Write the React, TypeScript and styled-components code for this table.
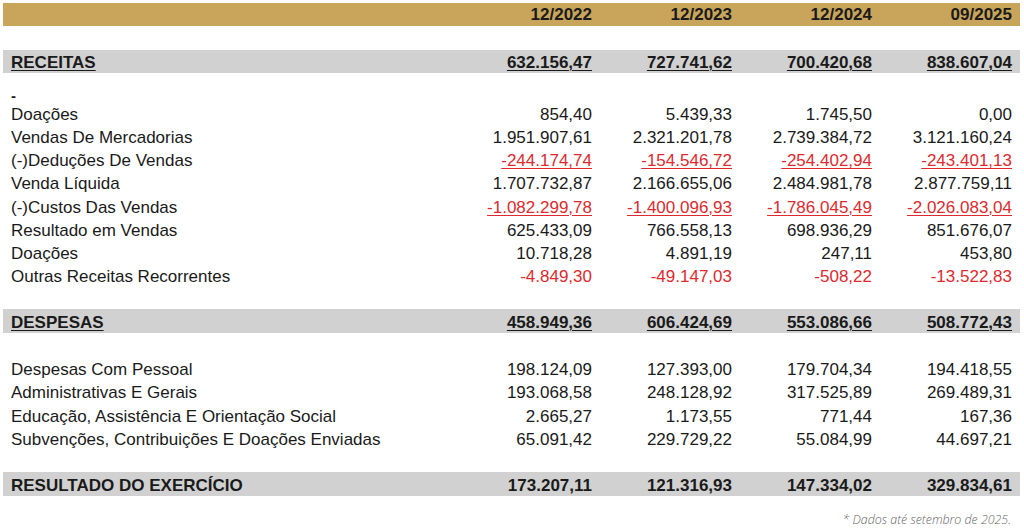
import React from "react";
import styled, { createGlobalStyle, css } from "styled-components";

const Global = createGlobalStyle`
  html, body { margin: 0; padding: 0; background: #ffffff; }
  body { font-family: "Liberation Sans", Arial, sans-serif; color: #1a1a1a; }
`;

const Page = styled.div`
  width: 1024px;
  height: 529px;
  box-sizing: border-box;
  padding: 3px 4px 0 3px;
  overflow: hidden;
`;

const Row = styled.div<{ $h?: number; $shift?: number; $bg?: string; $bold?: boolean }>`
  display: grid;
  grid-template-columns: 1fr 140px 140px 140px 140px;
  box-sizing: border-box;
  height: ${(p) => p.$h ?? 23.25}px;
  padding-top: ${(p) => p.$shift ?? 1}px;
  line-height: ${(p) => (p.$h ?? 23.25) - (p.$shift ?? 1)}px;
  background: ${(p) => p.$bg ?? "transparent"};
  font-size: 17px;
  font-weight: ${(p) => (p.$bold ? 700 : 400)};
  white-space: nowrap;
`;

const Label = styled.div<{ $underline?: boolean }>`
  padding-left: 8px;
  ${(p) =>
    p.$underline &&
    css`
      text-decoration: underline;
      text-decoration-thickness: 1px;
      text-underline-offset: 2px;
    `}
`;

const Cell = styled.div<{ $neg?: boolean; $underline?: boolean }>`
  text-align: right;
  padding-right: 8px;
  color: ${(p) => (p.$neg ? "#dc2a2e" : "inherit")};
  span {
    ${(p) =>
      p.$underline &&
      css`
        text-decoration: underline;
        text-decoration-thickness: 1px;
        text-underline-offset: 2px;
      `}
  }
`;

const Spacer = styled.div<{ $h: number }>`
  height: ${(p) => p.$h}px;
`;

const DashRow = styled.div`
  height: 29.5px;
  box-sizing: border-box;
  padding: 20px 0 0 8px;
  font-size: 15px;
  font-weight: 700;
  line-height: 6px;
  overflow: visible;
`;

const Footnote = styled.div`
  margin-top: 17px;
  padding-right: 9px;
  text-align: right;
  font-family: "Open Sans", sans-serif;
  font-style: italic;
  font-weight: 300;
  font-size: 12.4px;
  color: #666666;
  line-height: 14px;
`;

type Line = { label: string; values: string[]; underlineNeg?: boolean };

const receitas: Line[] = [
  { label: "Doações", values: ["854,40", "5.439,33", "1.745,50", "0,00"] },
  { label: "Vendas De Mercadorias", values: ["1.951.907,61", "2.321.201,78", "2.739.384,72", "3.121.160,24"] },
  { label: "(-)Deduções De Vendas", values: ["-244.174,74", "-154.546,72", "-254.402,94", "-243.401,13"], underlineNeg: true },
  { label: "Venda Líquida", values: ["1.707.732,87", "2.166.655,06", "2.484.981,78", "2.877.759,11"] },
  { label: "(-)Custos Das Vendas", values: ["-1.082.299,78", "-1.400.096,93", "-1.786.045,49", "-2.026.083,04"], underlineNeg: true },
  { label: "Resultado em Vendas", values: ["625.433,09", "766.558,13", "698.936,29", "851.676,07"] },
  { label: "Doações", values: ["10.718,28", "4.891,19", "247,11", "453,80"] },
  { label: "Outras Receitas Recorrentes", values: ["-4.849,30", "-49.147,03", "-508,22", "-13.522,83"] },
];

const despesas: Line[] = [
  { label: "Despesas Com Pessoal", values: ["198.124,09", "127.393,00", "179.704,34", "194.418,55"] },
  { label: "Administrativas E Gerais", values: ["193.068,58", "248.128,92", "317.525,89", "269.489,31"] },
  { label: "Educação, Assistência E Orientação Social", values: ["2.665,27", "1.173,55", "771,44", "167,36"] },
  { label: "Subvenções, Contribuições E Doações Enviadas", values: ["65.091,42", "229.729,22", "55.084,99", "44.697,21"] },
];

const DataRow: React.FC<{ line: Line }> = ({ line }) => (
  <Row>
    <Label>{line.label}</Label>
    {line.values.map((v, i) => {
      const neg = v.startsWith("-");
      return (
        <Cell key={i} $neg={neg} $underline={neg && line.underlineNeg}>
          <span>{v}</span>
        </Cell>
      );
    })}
  </Row>
);

const TotalRow: React.FC<{ label: string; values: string[]; underline?: boolean; h: number }> = ({
  label,
  values,
  underline,
  h,
}) => (
  <Row $h={h} $shift={3} $bg="#d1d1d1" $bold>
    <Label $underline={underline}>{label}</Label>
    {values.map((v, i) => (
      <Cell key={i} $underline={underline}>
        <span>{v}</span>
      </Cell>
    ))}
  </Row>
);

export default function App() {
  return (
    <Page>
      <Global />
      <Row $h={23} $shift={0} $bg="#c8a55b" $bold>
        <Label />
        {["12/2022", "12/2023", "12/2024", "09/2025"].map((h) => (
          <Cell key={h}>
            <span>{h}</span>
          </Cell>
        ))}
      </Row>
      <Spacer $h={24} />
      <TotalRow label="RECEITAS" values={["632.156,47", "727.741,62", "700.420,68", "838.607,04"]} underline h={23} />
      <DashRow>-</DashRow>
      {receitas.map((l, i) => (
        <DataRow key={i} line={l} />
      ))}
      <Spacer $h={20.5} />
      <TotalRow label="DESPESAS" values={["458.949,36", "606.424,69", "553.086,66", "508.772,43"]} underline h={24} />
      <Spacer $h={25} />
      {despesas.map((l, i) => (
        <DataRow key={i} line={l} />
      ))}
      <Spacer $h={20.5} />
      <TotalRow label="RESULTADO DO EXERCÍCIO" values={["173.207,11", "121.316,93", "147.334,02", "329.834,61"]} h={24} />
      <Footnote>* Dados até setembro de 2025.</Footnote>
    </Page>
  );
}
